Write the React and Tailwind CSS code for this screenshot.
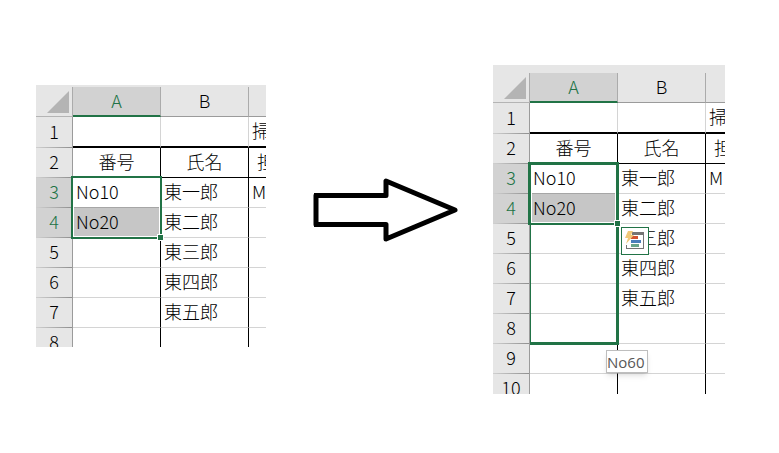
import clsx from 'clsx'

const PEOPLE = ['東一郎', '東二郎', '東三郎', '東四郎', '東五郎']

const ColumnHead = ({ children, selected }) => (
  <th
    scope="col"
    className={clsx(
      'h-[30px] border-r border-r-[#ababab] p-0 text-center font-light',
      selected
        ? 'border-b-2 border-b-[#217346] bg-[#d2d2d2] pb-[3px] text-[#217346]'
        : 'border-b border-b-[#9b9b9b] bg-[#e6e6e6] pb-1 text-black'
    )}
  >
    {children}
  </th>
)

const RowHead = ({ row }) => {
  const selected = row === 3 || row === 4

  return (
    <th
      scope="row"
      className={clsx(
        'border-r border-[#9b9b9b] bg-[linear-gradient(to_right,#d0d0d0,#8f8f8f)] bg-size-[100%_1px] bg-bottom bg-no-repeat p-0 pb-1 text-center font-light',
        selected ? 'bg-[#d2d2d2] text-[#217346]' : 'bg-[#e6e6e6] text-black'
      )}
    >
      {row}
    </th>
  )
}

const FlashFillButton = () => (
  <button
    type="button"
    aria-label="フラッシュ フィル オプション"
    className="absolute top-[63px] left-[91px] flex size-7 items-center justify-center border border-[#217346] bg-white"
  >
    <svg viewBox="0 0 24 24" className="size-6" shapeRendering="crispEdges">
      <path d="M9 3h12v3H9z" fill="#747474" />
      <path d="M20 5h1v15h-1zM3 16h1v4H3zM3 19h18v1H3z" fill="#747474" />
      <path d="M8 7h7v3H8z" fill="#d35230" />
      <path d="M8 11h10v3H8z" fill="#4a7ebb" />
      <path d="M8 15h8v3H8z" fill="#69a58b" />
      <path d="M5 2h5L8 6h3l-8 9 2-6H2z" fill="#f0c878" shapeRendering="auto" />
    </svg>
  </button>
)

// Anchored to the top left corner of cell A3
const Selection = ({ dragging }) => (
  <div className="absolute top-0 left-0 z-10">
    {dragging && (
      <div className="absolute -top-0.5 left-0 h-[183px] w-[89px] border-3 border-l border-[#217346]" />
    )}
    <div
      className={clsx(
        'absolute -top-0.5 -left-0.5 h-[63px] w-[91px] border-[#217346] shadow-[inset_0_0_0_1px_white]',
        dragging ? 'border-3 border-b-2' : 'border-2'
      )}
    />
    <div className="absolute top-14 left-[84px] size-[7px] border border-white bg-[#217346]" />
    {dragging && <FlashFillButton />}
    {dragging && (
      <div
        role="tooltip"
        className="absolute top-[186px] left-[76px] flex h-[23px] w-[42px] items-center border border-[#bebebe] bg-white font-['Open_Sans',sans-serif] text-[15px] leading-5 font-normal text-[#575757] shadow-md"
      >
        No60
      </div>
    )}
  </div>
)

const Sheet = ({ rows, dragging, className }) => (
  <div className={clsx('shrink-0 overflow-hidden bg-[#e6e6e6]', className)}>
    <table className="w-[301px] table-fixed border-separate border-spacing-0 bg-white text-[18px] leading-6 font-light text-black">
      <colgroup>
        <col className="w-[37px]" />
        <col className="w-[88px]" />
        <col className="w-[88px]" />
        <col className="w-[88px]" />
      </colgroup>
      <thead>
        <tr>
          <td className="border-r border-b border-r-[#ababab] border-b-[#b4b4b4] bg-[#e6e6e6] p-0 pr-[3px] pb-[3px] align-bottom">
            <svg viewBox="0 0 22 22" className="ml-auto size-[22px]">
              <path d="M22 0v22H0z" fill="#b4b4b4" />
            </svg>
          </td>
          <ColumnHead selected>A</ColumnHead>
          <ColumnHead>B</ColumnHead>
          <ColumnHead />
        </tr>
      </thead>
      <tbody>
        <tr className="h-[31px]">
          <RowHead row={1} />
          <td className="border-r border-b-2 border-r-[#d4d4d4] border-b-black p-0" />
          <td className="border-r border-b-2 border-r-[#d4d4d4] border-b-black p-0" />
          <td className="border-b-2 border-black p-0 pb-[3px] pl-[3px]">掃除</td>
        </tr>
        <tr className="h-[30px]">
          <RowHead row={2} />
          <td className="border-r border-b border-black p-0 pb-1 text-center">番号</td>
          <td className="border-r border-b border-black p-0 pb-1 text-center">氏名</td>
          <td className="border-b border-black p-0 pb-1 pl-2">担当</td>
        </tr>
        {rows.map((row) => (
          <tr key={row} className="h-[30px]">
            <RowHead row={row} />
            <td
              className={clsx(
                'border-r border-b border-r-black p-0 pb-1 pl-[3px]',
                row === 3 ? 'relative border-b-[#a6a6a6]' : 'border-b-[#d4d4d4]',
                row === 4 && 'bg-[#c6c6c6]'
              )}
            >
              {row === 3 && 'No10'}
              {row === 4 && 'No20'}
              {row === 3 && <Selection dragging={dragging} />}
            </td>
            <td className="border-r border-b border-r-black border-b-[#d4d4d4] p-0 pb-1 pl-[3px]">
              {PEOPLE[row - 3]}
            </td>
            <td className="border-b border-[#d4d4d4] p-0 pb-1 pl-[3px]">{row === 3 && 'M'}</td>
          </tr>
        ))}
      </tbody>
    </table>
  </div>
)

const Arrow = () => (
  <svg viewBox="0 0 146 66" className="h-[66px] w-[146px]" aria-hidden="true">
    <path
      d="M74 17.5H4V46.5H74V61L143 32 74 3z"
      fill="white"
      stroke="black"
      strokeWidth="5"
      strokeLinejoin="round"
    />
    <path d="M2 15h5v5H2zM2 44h5v5H2z" />
  </svg>
)

export default function App() {
  return (
    <main className="flex min-h-screen items-start bg-white pr-[54px] pl-9 font-['Noto_Sans_CJK_JP',sans-serif]">
      <Sheet rows={[3, 4, 5, 6, 7, 8]} className="mt-[85px] h-[262px] w-[230px] pt-0.5" />
      <div className="mt-[178px] flex flex-1 justify-center pl-2.5">
        <Arrow />
      </div>
      <Sheet
        rows={[3, 4, 5, 6, 7, 8, 9, 10]}
        dragging
        className="mt-[65px] h-[329px] w-[232px] pt-2"
      />
    </main>
  )
}
